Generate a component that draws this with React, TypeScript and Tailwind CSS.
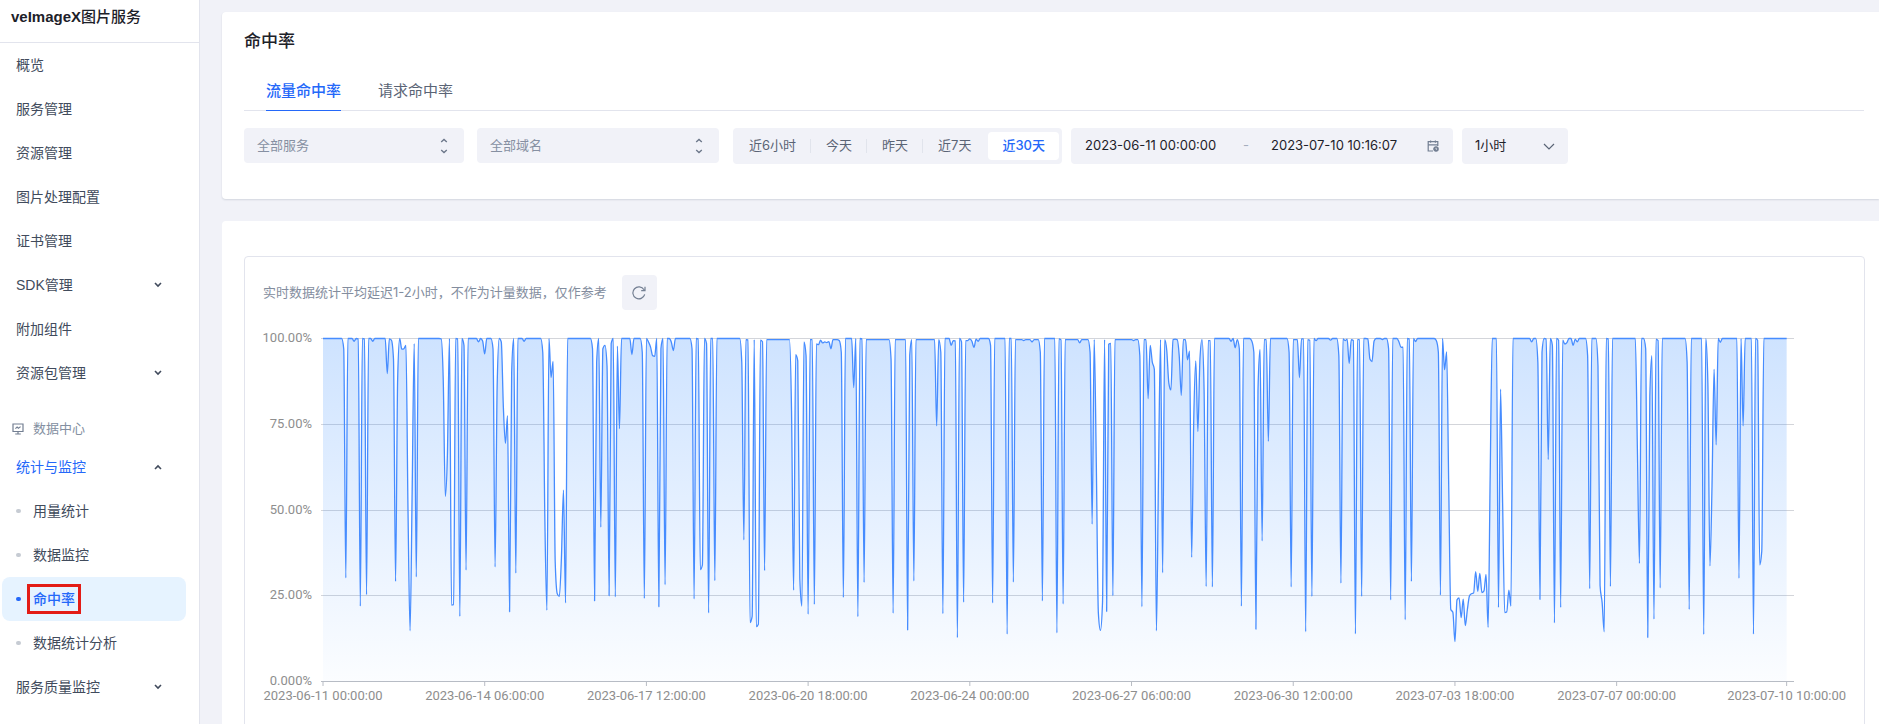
import { useId, useState } from "react";
import type { ReactNode } from "react";
import clsx from "clsx";

interface NavItem {
    label: string;
    expandable?: boolean;
}

const MAIN_NAV: NavItem[] = [
    { label: "概览" },
    { label: "服务管理" },
    { label: "资源管理" },
    { label: "图片处理配置" },
    { label: "证书管理" },
    { label: "SDK管理", expandable: true },
    { label: "附加组件" },
    { label: "资源包管理", expandable: true },
];

const STATS_NAV = ["用量统计", "数据监控", "命中率", "数据统计分析"];
const TABS = ["流量命中率", "请求命中率"];
const RANGES = ["近6小时", "今天", "昨天", "近7天", "近30天"];

// Hourly samples, 2023-06-11 00:00 through 2023-07-10 10:00
const HOURS = 706;

// [from, to, rate] stretches that settle slightly below 100%
const PLATEAUS = [
    [214, 225, 99.7],
    [262, 273, 99.7],
    [276, 281, 99.7],
    [286, 295, 99.7],
    [334, 345, 99.7],
    [358, 369, 99.7],
    [382, 393, 99.7],
];

// [first hour, ...rates], every hour that is not listed is 100%
const RUNS = [
    [10, 97, 30.2],
    [15, 99.2],
    [17, 99.9, 22],
    [20, 99.9, 25.3],
    [24, 99.2],
    [31, 89.8, 99.9, 99.5, 94, 29.2, 88, 100, 96.9, 97, 98, 50, 14.8, 55, 98.5, 30.5],
    [57, 99.9, 88, 54, 66, 100, 22.3, 22.4, 100, 99.9, 19, 100, 98, 32.5],
    [75, 99, 100, 99.3, 95.5],
    [82, 97, 33.4, 86, 100, 99, 80, 69.4, 77.5, 20.3, 90, 100, 31.6],
    [97, 99.2],
    [106, 96, 48, 20.8, 100, 88.7, 93.3, 35, 25.6, 24.8, 36, 55.8, 22.9],
    [130, 97, 23.5, 93, 100, 45, 97, 98, 92, 25, 98.5, 100, 24.7, 97.8, 73.7],
    [149, 95.3],
    [154, 96, 24.2, 100, 99, 97.5, 95, 94.8, 100, 21.8, 97, 100, 28.2],
    [168, 99, 96.5],
    [178, 97, 24.1, 100, 99.9, 32.6, 34, 100, 98.5, 20, 100, 100, 29.4],
    [202, 93, 41.3, 99.7, 99.6, 17.2, 19, 99.7, 16, 16.7, 99.5, 99, 32.3],
    [226, 79, 26.6, 95.3, 93.5, 30, 22, 99, 95, 19.6, 99.7, 99.7, 22.5],
    [238, 98.4, 98.2, 99.5, 98.7, 99, 98.8, 99.1, 97, 99.7, 99.7, 99.7, 99.4, 96, 24.5],
    [256, 85.7, 100, 18.9, 100, 99.9, 28.9],
    [274, 94, 19.9],
    [282, 15, 95, 99.7, 29.3],
    [296, 74.5, 99.7, 96, 19.8, 100, 100, 100, 98, 99.4, 99.3, 12.8, 100, 99, 23.1],
    [310, 99.4, 99.4, 99.9, 99.2, 97.4, 99.8, 99.2],
    [322, 98, 22.9],
    [330, 13.8, 100, 100, 29],
    [338, 99.4],
    [342, 99],
    [346, 96, 23.5],
    [354, 14.2, 99.9, 99.6, 22.6],
    [365, 98.7],
    [370, 96, 45.9, 99.7, 64, 20, 14.9, 23, 99.7, 20.4, 98.3, 98.6, 25],
    [391, 99.4],
    [394, 95, 21.8, 99.7, 99.7, 82.5, 98, 93.2, 91, 14.8, 60, 99.7, 31.7],
    [406, 99.7, 96.5, 87, 85, 99.7, 99.8, 99.7, 95, 83.4, 99.7, 99.7, 93.8, 96.3],
    [419, 36.2, 76, 93.5, 72.9, 94, 99.7, 85, 27.7, 99.4, 99.4, 27.6],
    [438, 99.2, 100, 97.3, 99.7, 97, 22],
    [448, 99.3, 96, 15.2, 85, 96.8, 41, 99.7, 99.7, 70],
    [466, 96, 27.6, 99.7, 99.7, 99.7, 88.6, 99.9, 99.9, 14.5, 99.7, 99.5, 24.8],
    [479, 99.4],
    [486, 99.5],
    [490, 95, 28.7, 99.9, 99.4, 99.8, 92.7, 99.7, 99.4, 13.9, 99.7, 99.7, 24.8],
    [504, 99.9, 94, 93.3, 99.3],
    [511, 99.7],
    [514, 97, 23.8],
    [519, 99, 97.4, 97.5, 18, 100, 99.9, 29.2, 100, 99.1],
    [537, 99.4, 96, 25.2, 100, 90.9, 96.1, 57, 21, 20.2, 11.6, 23.8, 24.4, 18.6, 24],
    [551, 16.3, 21, 24.9, 25.6, 25.8, 32, 26.3, 31.5, 25.9, 26.4, 31.2, 15.8, 60],
    [567, 21.6, 85.2, 52, 20.1, 20.3, 26.6, 22],
    [583, 99],
    [586, 93, 23.9, 96, 100, 99.9, 64.7, 100, 98, 17.1, 100, 99.5, 21.6, 99.5, 98.4, 98.8],
    [603, 98, 99.8, 99],
    [610, 95, 27.1],
    [615, 92, 28, 23, 14.5, 100, 99.9, 27.7],
    [634, 68, 34.4, 100, 100, 97, 12.8, 83, 95, 18.2, 99.8, 99.4, 27.3],
    [658, 93, 21],
    [666, 13.7, 100, 87, 33.7, 57, 91, 69, 100, 98.9],
    [683, 30.1, 100, 74.5],
    [690, 13.8, 100, 99.5, 34, 38],
];

const X_TICKS = [
    { hour: 0, label: "2023-06-11 00:00:00" },
    { hour: 78, label: "2023-06-14 06:00:00" },
    { hour: 156, label: "2023-06-17 12:00:00" },
    { hour: 234, label: "2023-06-20 18:00:00" },
    { hour: 312, label: "2023-06-24 00:00:00" },
    { hour: 390, label: "2023-06-27 06:00:00" },
    { hour: 468, label: "2023-06-30 12:00:00" },
    { hour: 546, label: "2023-07-03 18:00:00" },
    { hour: 624, label: "2023-07-07 00:00:00" },
    { hour: 706, label: "2023-07-10 10:00:00" },
];

const Y_TICKS = ["100.00%", "75.00%", "50.00%", "25.00%", "0.000%"];
const PLOT_HEIGHT = 343;
// share of the axis that the samples take up, the rest is a short overhang
const DATA_SHARE = 99.5;

function buildSeries() {
    const values: number[] = new Array(HOURS + 1).fill(100);
    for (const [from, to, rate] of PLATEAUS) values.fill(rate, from, to + 1);
    for (const [start, ...rates] of RUNS) rates.forEach((rate, i) => (values[start + i] = rate));
    return values;
}

// Monotone cubic through the samples, so the curve never overshoots 100%
function buildPath(values: number[]) {
    const last = values.length - 1;
    const slope = values.map((v, i) => {
        if (i === 0 || i === last) return 0;
        const before = v - values[i - 1];
        const after = values[i + 1] - v;
        if (before * after <= 0) return 0;
        return Math.sign(before) * Math.min(Math.abs(before), Math.abs(after), Math.abs(before + after) / 4) * 2;
    });
    let d = `M0,${100 - values[0]}`;
    for (let i = 0; i < last; i++) {
        const y1 = 100 - values[i] - slope[i] / 3;
        const y2 = 100 - values[i + 1] + slope[i + 1] / 3;
        d += `C${(i + 1 / 3).toFixed(2)},${y1.toFixed(2)} ${(i + 2 / 3).toFixed(2)},${y2.toFixed(2)} ${i + 1},${(100 - values[i + 1]).toFixed(2)}`;
    }
    return d;
}

const LINE = buildPath(buildSeries());

function HitRateChart() {
    const gradientId = useId();

    return (
        <div className="mt-7 mr-[70px] ml-[78px]">
            <svg
                className="block h-[372px] w-full overflow-visible font-['Roboto',sans-serif] text-[13px]"
                role="img"
                aria-label="流量命中率"
            >
                <defs>
                    <linearGradient id={gradientId} x1="0" y1="0" x2="0" y2="1">
                        <stop offset="0" stopColor="#3c8fff" stopOpacity="0.25" />
                        <stop offset="1" stopColor="#3c8fff" stopOpacity="0.02" />
                    </linearGradient>
                </defs>
                {Y_TICKS.map((label, i) => {
                    const y = Math.round((PLOT_HEIGHT * i) / 4);
                    return (
                        <g key={label}>
                            <line x1="-2" x2="100%" y1={y + 0.5} y2={y + 0.5} stroke={i === 4 ? "#b8bcc4" : "#d3d5da"} />
                            <text x="-11" y={y + 4} textAnchor="end" className="fill-[#8e8e8e]">
                                {label}
                            </text>
                        </g>
                    );
                })}
                {X_TICKS.map(({ hour, label }) => {
                    const x = `${(hour / HOURS) * DATA_SHARE}%`;
                    return (
                        <g key={label}>
                            <line x1={x} x2={x} y1={PLOT_HEIGHT} y2={PLOT_HEIGHT + 5} stroke="#b8bcc4" />
                            <text x={x} y={PLOT_HEIGHT + 19} textAnchor="middle" className="fill-[#8e8e8e]">
                                {label}
                            </text>
                        </g>
                    );
                })}
                <svg
                    y="0.5"
                    width={`${DATA_SHARE}%`}
                    height={PLOT_HEIGHT}
                    viewBox={`0 0 ${HOURS} 100`}
                    preserveAspectRatio="none"
                    className="overflow-visible"
                >
                    <path d={`${LINE}V100H0Z`} fill={`url(#${gradientId})`} />
                    <path
                        d={LINE}
                        fill="none"
                        stroke="#468cff"
                        strokeWidth="1.3"
                        strokeLinejoin="bevel"
                        vectorEffect="non-scaling-stroke"
                    />
                </svg>
            </svg>
        </div>
    );
}

function Caret({ up = false }: { up?: boolean }) {
    return (
        <svg className={clsx("h-1.5 w-2", up && "rotate-180")} viewBox="0 0 8 6" fill="none" stroke="#414b5c" strokeWidth="1.6">
            <path d="M1 1l3 3 3-3" />
        </svg>
    );
}

function BoardIcon() {
    return (
        <svg className="h-3 w-3" viewBox="0 0 12 12" fill="none" stroke="#737f92" strokeWidth="1.2">
            <path d="M1 1h10v7.5H1zM6 8.5V11M3.2 11h5.6M3.4 5.6l1.7-1.5 1.3 1.2L8.6 3.6" />
        </svg>
    );
}

function UpDownIcon() {
    return (
        <svg className="h-4 w-2" viewBox="0 0 8 16" fill="none" stroke="#6b7689" strokeWidth="1.3">
            <path d="M1.2 4L4 1.4 6.8 4M1.2 12L4 14.6 6.8 12" />
        </svg>
    );
}

function CalendarIcon() {
    return (
        <svg className="h-3 w-3" viewBox="0 0 12 12" fill="none" stroke="#737f92" strokeWidth="1.2">
            <path d="M6 11H1.2V1.6h9.6V6M1.2 4.8h9.6M3.6.5v2.2M8.4.5v2.2" />
            <circle cx="9" cy="9" r="2.2" fill="#737f92" />
            <path d="M9 7.8v1.4h1" stroke="#f1f2f8" strokeWidth="0.8" />
        </svg>
    );
}

function NavRow({ children, active = false, ...rest }: { children: ReactNode; active?: boolean; "aria-current"?: "page" }) {
    return (
        <a
            href="#"
            className={clsx(
                "flex h-11 items-center rounded-lg pr-6 pl-3.5 text-sm",
                active ? "bg-[#e6f3ff] font-medium text-[#2468f9]" : "text-[#414b5c]",
            )}
            {...rest}
        >
            {children}
        </a>
    );
}

function Sidebar() {
    return (
        <aside className="w-[200px] shrink-0 border-r border-[#e2e4ed] bg-white">
            <h1 className="h-[43px] border-b border-[#e2e4ed] pt-1.5 pl-[11px] text-[15px] leading-[22px] font-medium text-[#1d2129]">
                <span className="font-bold">veImageX</span>图片服务
            </h1>
            <nav className="pr-[13px] pl-0.5">
                <ul>
                    {MAIN_NAV.map((item) => (
                        <li key={item.label}>
                            <NavRow>
                                <span className="flex-1">{item.label}</span>
                                {item.expandable && <Caret />}
                            </NavRow>
                        </li>
                    ))}
                </ul>
                <div className="flex h-[50px] items-center gap-[9px] pt-[18px] pl-2.5 text-[13px] text-[#838fa1]">
                    <BoardIcon />
                    <span>数据中心</span>
                </div>
                <a href="#" className="flex h-11 items-center pr-6 pl-3.5 text-sm text-[#2468f9]">
                    <span className="flex-1">统计与监控</span>
                    <Caret up />
                </a>
                <ul>
                    {STATS_NAV.map((label) => {
                        const active = label === "命中率";
                        return (
                            <li key={label}>
                                <NavRow active={active} aria-current={active ? "page" : undefined}>
                                    <span className={clsx("h-1 w-[5px] rounded-sm", active ? "bg-[#2468f9]" : "bg-[#c6cbd3]")} />
                                    <span
                                        className={clsx(
                                            active ? "ml-1.5 border-[3px] border-[#e31c16] px-[3px] py-0.5 leading-5" : "ml-3",
                                        )}
                                    >
                                        {label}
                                    </span>
                                </NavRow>
                            </li>
                        );
                    })}
                </ul>
                <NavRow>
                    <span className="flex-1">服务质量监控</span>
                    <Caret />
                </NavRow>
            </nav>
        </aside>
    );
}

function SearchSelect({ label, className }: { label: string; className: string }) {
    return (
        <div className={clsx("relative", className)}>
            <select
                aria-label={label}
                className="h-[35px] w-full appearance-none rounded-sm bg-[#f1f2f8] px-[13px] text-[13px] text-[#8690a2] outline-none"
            >
                <option>{label}</option>
            </select>
            <span className="pointer-events-none absolute inset-y-0 right-4 flex items-center">
                <UpDownIcon />
            </span>
        </div>
    );
}

function FilterBar() {
    const [range, setRange] = useState("近30天");
    const [from, setFrom] = useState("2023-06-11 00:00:00");
    const [to, setTo] = useState("2023-07-10 10:16:07");

    return (
        <div className="mt-[17px] flex items-start">
            <SearchSelect label="全部服务" className="mr-[13px] w-[220px]" />
            <SearchSelect label="全部域名" className="mr-3.5 w-[242px]" />
            <div className="mr-[9px] flex h-9 items-center rounded-sm bg-[#f1f2f8] pr-[3px] pl-0.5">
                {RANGES.map((item, i) => (
                    <div key={item} className="flex items-center">
                        <button
                            type="button"
                            aria-pressed={range === item}
                            onClick={() => setRange(item)}
                            className={clsx(
                                "h-7 rounded-sm px-3.5 text-[13px] whitespace-nowrap",
                                range === item ? "bg-white font-medium text-[#2468f9]" : "text-[#5a6475]",
                            )}
                        >
                            {item}
                        </button>
                        {i < 3 && <span className="mr-px h-3.5 w-px bg-[#e1e4ec]" />}
                        {i === 3 && <span className="w-[3px]" />}
                    </div>
                ))}
            </div>
            <div className="mr-[9px] flex h-9 w-[382px] items-center rounded-sm bg-[#f1f2f8] px-3.5 text-[13px] text-[#1d2129]">
                <input aria-label="开始时间" value={from} onChange={(e) => setFrom(e.target.value)} className="w-[158px] outline-none" />
                <span className="w-7 text-[#a5aebd]">-</span>
                <input aria-label="结束时间" value={to} onChange={(e) => setTo(e.target.value)} className="w-[140px] outline-none" />
                <span className="ml-auto">
                    <CalendarIcon />
                </span>
            </div>
            <div className="relative w-[106px]">
                <select
                    aria-label="时间粒度"
                    className="h-9 w-full appearance-none rounded-sm bg-[#f1f2f8] px-[13px] text-[13px] text-[#1d2129] outline-none"
                >
                    <option>1小时</option>
                </select>
                <svg
                    className="pointer-events-none absolute top-[15px] right-[13px] h-2 w-3"
                    viewBox="0 0 12 8"
                    fill="none"
                    stroke="#5a6475"
                    strokeWidth="1.2"
                >
                    <path d="M1 1l5 5 5-5" />
                </svg>
            </div>
        </div>
    );
}

export default function App() {
    const [tab, setTab] = useState(TABS[0]);

    return (
        <div className="flex h-screen overflow-hidden bg-[#f1f2f8] font-['Liberation_Sans','Noto_Sans_CJK_SC',sans-serif]">
            <Sidebar />
            <main className="flex min-w-0 flex-1 flex-col gap-[22px] pt-3 pl-[22px] font-[Inter,'Noto_Sans_CJK_SC',sans-serif]">
                <section className="shrink-0 rounded-l-sm bg-white pt-4 pr-[15px] pb-[35px] pl-[22px] shadow-[0_1px_2px_rgba(30,40,70,0.14)]">
                    <h2 className="text-[17px] leading-[26px] font-medium text-[#1d2129]">命中率</h2>
                    <div role="tablist" className="mt-[15px] flex h-[42px] gap-[37px] border-b border-[#e2e4ed] pl-[22px]">
                        {TABS.map((item) => (
                            <button
                                key={item}
                                type="button"
                                role="tab"
                                aria-selected={tab === item}
                                onClick={() => setTab(item)}
                                className={clsx(
                                    "-mb-px border-b pt-[3px] text-[15px]",
                                    tab === item ? "border-[#2468f9] font-medium text-[#2468f9]" : "border-transparent text-[#5a6475]",
                                )}
                            >
                                {item}
                            </button>
                        ))}
                    </div>
                    <FilterBar />
                </section>
                <section className="shrink-0 rounded-l-sm bg-white pt-[35px] pr-3.5 pb-9 pl-[22px]">
                    <div className="rounded border border-[#e2e4ed] pt-[18px] pb-10">
                        <div className="flex items-center gap-[15px] pl-[18px]">
                            <p className="text-[13px] text-[#838d9e]">实时数据统计平均延迟1-2小时，不作为计量数据，仅作参考</p>
                            <button
                                type="button"
                                aria-label="刷新"
                                className="flex h-[35px] w-[35px] items-center justify-center rounded-sm bg-[#f1f2f8]"
                            >
                                <svg className="h-3.5 w-3.5" viewBox="0 0 14 14" fill="none" stroke="#737f92" strokeWidth="1.2">
                                    <path d="M12.7 8.4A6 6 0 1 1 12 3.7M13 .8v3.9H9.2" />
                                </svg>
                            </button>
                        </div>
                        <HitRateChart />
                    </div>
                </section>
            </main>
        </div>
    );
}
